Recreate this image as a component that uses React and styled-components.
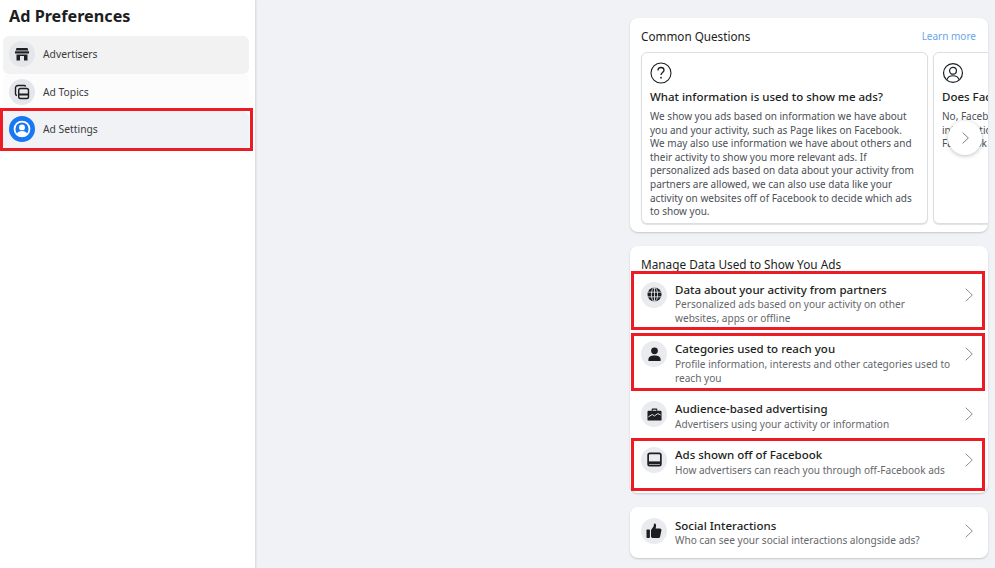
import React from "react";
import styled, { createGlobalStyle } from "styled-components";

const GlobalStyle = createGlobalStyle`
  html, body {
    margin: 0;
    padding: 0;
    height: 568px;
    overflow: hidden;
    background: #f0f2f5;
    font-family: "Noto Sans", "Open Sans", sans-serif;
    color: #1c1e21;
  }
`;

const Page = styled.div`
  display: flex;
  width: 995px;
  height: 568px;
  overflow: hidden;
`;

const Sidebar = styled.aside`
  width: 255px;
  height: 568px;
  flex: none;
  background: #fff;
  box-shadow: 1px 0 2px rgba(0, 0, 0, 0.12);
  padding: 5px 6px 0 3px;
  box-sizing: border-box;
`;

const SideTitle = styled.h1`
  margin: 0 0 9px 6px;
  font-size: 16.2px;
  line-height: 22px;
  font-weight: 700;
  color: #1c1e21;
`;

const SideItem = styled.div`
  position: relative;
  display: flex;
  align-items: center;
  gap: 8px;
  height: 37.5px;
  box-sizing: border-box;
  padding: 0 0 1.5px 6px;
  border-radius: 6px;
  background: ${(p) => p.$bg};
  font-size: 10.3px;
  color: #3a3b3d;
`;

const SideIcon = styled.span`
  width: 26px;
  height: 26px;
  border-radius: 50%;
  flex: none;
  display: flex;
  align-items: center;
  justify-content: center;
  background: ${(p) => (p.$active ? "#1877f2" : "#e4e6eb")};
`;

const Marker = styled.span`
  position: absolute;
  top: ${(p) => p.$top}px;
  right: ${(p) => p.$right}px;
  bottom: ${(p) => p.$bottom}px;
  left: ${(p) => p.$left}px;
  border: 3px solid #ed1c24;
  pointer-events: none;
`;

const Main = styled.main`
  flex: 1;
  padding: 18px 7px 0 375px;
  min-width: 0;
  display: flex;
  flex-direction: column;
`;

const Card = styled.section`
  width: 358px;
  margin-bottom: ${(p) => p.$gap}px;
  padding: ${(p) => p.$pad};
  background: #fff;
  border-radius: 8px;
  box-shadow: 0 1px 2px rgba(0, 0, 0, 0.18);
  box-sizing: border-box;
  overflow: ${(p) => (p.$clip ? "hidden" : "visible")};
  position: relative;
`;

const QuestionsHead = styled.div`
  display: flex;
  justify-content: space-between;
  align-items: center;
  height: 34px;
  padding: 2px 12px 0 11px;
  box-sizing: border-box;
  font-size: 11.7px;
  color: #1c1e21;
`;

const LearnMore = styled.a`
  color: #6aa5e8;
  font-size: 10px;
`;

const Carousel = styled.div`
  display: flex;
  gap: 5px;
  padding: 0 0 8px 11px;
`;

const QuestionCard = styled.article`
  flex: none;
  width: 287px;
  height: 172px;
  box-sizing: border-box;
  padding: 9px 8px 0;
  border: 1px solid #dadde1;
  border-radius: 6px;
  box-shadow: 0 1px 1px rgba(0, 0, 0, 0.12);
  background: #fff;
  overflow: hidden;
  svg {
    display: block;
  }
`;

const QuestionTitle = styled.h3`
  margin: 5px 0 5px;
  font-size: 11.5px;
  line-height: 16px;
  font-weight: 500;
  white-space: nowrap;
  color: #1c1e21;
`;

const QuestionText = styled.p`
  margin: 0;
  font-size: 10px;
  line-height: 13.6px;
  color: #4b4f56;
`;

const NextButton = styled.button`
  position: absolute;
  top: 103px;
  right: 6px;
  width: 34px;
  height: 34px;
  border: 0;
  padding: 0;
  border-radius: 50%;
  background: #fff;
  box-shadow: 0 1px 4px rgba(0, 0, 0, 0.25);
  display: flex;
  align-items: center;
  justify-content: center;
`;

const SectionTitle = styled.h2`
  margin: 0;
  padding: 10px 11px 0;
  font-size: 11.8px;
  line-height: 17.5px;
  font-weight: 400;
  color: #1c1e21;
`;

const Row = styled.div`
  position: relative;
  display: flex;
  align-items: flex-start;
  gap: 8px;
  padding: 8px 15px 8px 11px;
`;

const RowIcon = styled.span`
  width: 26px;
  height: 26px;
  border-radius: 50%;
  flex: none;
  display: flex;
  align-items: center;
  justify-content: center;
  background: #e9ebef;
`;

const RowBody = styled.div`
  flex: 1;
  min-width: 0;
`;

const RowTitle = styled.div`
  font-size: 11.5px;
  line-height: 15.8px;
  font-weight: 500;
  color: #1c1e21;
`;

const RowText = styled.div`
  max-width: 276px;
  font-size: 10.1px;
  line-height: 14px;
  color: #65676b;
`;

const RowArrow = styled.span`
  flex: none;
  display: flex;
  margin-top: 6px;
`;

const Chevron = ({ width = 8, height = 14, color = "#8a8d91" }) => (
  <svg width={width} height={height} viewBox="0 0 8 14" fill="none" stroke={color} strokeWidth="1">
    <path d="M.7.7L7.300 7 .7 13.300" />
  </svg>
);

const Store = () => (
  <svg width="16" height="16" viewBox="0 0 16 16" fill="#1c1e21">
    <path d="M2.500 2h11l.8 2.500H1.700z" />
    <path d="M1 5.300h14v2.200H1z" />
    <path d="M2.500 8.500h11V14.500H10V10H6v4.500H2.500z" />
  </svg>
);

const Topics = () => (
  <svg width="16" height="16" viewBox="0 0 16 16" fill="none" stroke="#1c1e21" strokeWidth="1.4">
    <path d="M3 11.500c-1-.2-1.500-.8-1.500-1.800V4c0-1.500 1-2.500 2.500-2.500h6c.8 0 1.400.4 1.700 1" />
    <rect x="4.700" y="4.500" width="9.800" height="10" rx="1.800" />
    <path d="M5 10.500h9" strokeWidth="2" />
  </svg>
);

const UserCircle = ({ color = "#fff", size = 18, width = 1.6 }) => (
  <svg width={size} height={size} viewBox="0 0 20 20" fill="none" stroke={color} strokeWidth={width}>
    <circle cx="10" cy="10" r="8.600" />
    <circle cx="10" cy="8" r="3.100" />
    <path d="M4.500 16c.8-2.500 3-3.500 5.500-3.500s4.700 1 5.500 3.500" />
  </svg>
);

const ActiveUser = () => (
  <svg width="18" height="18" viewBox="0 0 20 20" fill="none">
    <circle cx="10" cy="10" r="8.300" stroke="#fff" strokeWidth="2" />
    <circle cx="10" cy="8.200" r="3.300" fill="#fff" />
    <path d="M4.300 15.500c.8-2.500 3-3.300 5.700-3.300s4.900.8 5.700 3.300c-1.500 1.600-3.500 2.500-5.700 2.500s-4.200-.9-5.700-2.500z" fill="#fff" />
  </svg>
);

const QuestionMark = () => (
  <svg width="22" height="22" viewBox="0 0 22 22" fill="none" stroke="#1c1e21" strokeWidth="1.1">
    <circle cx="11" cy="11" r="10" />
    <path d="M8 8.500c0-1.800 1.300-3 3-3s3 1.100 3 2.700c0 2.300-3 2.400-3 4.800" strokeWidth="1.300" />
    <circle cx="11" cy="15.700" r="0.900" fill="#1c1e21" stroke="none" />
  </svg>
);

const Globe = () => (
  <svg width="15" height="15" viewBox="0 0 16 16" fill="none">
    <circle cx="8" cy="8" r="7.500" fill="#1c1e21" />
    <g stroke="#e9ebef" strokeWidth="0.9">
      <ellipse cx="8" cy="8" rx="3.300" ry="7.500" />
      <path d="M8 .5v15M.8 5.500h14.400M.8 10.500h14.400" />
    </g>
  </svg>
);

const Person = () => (
  <svg width="15" height="15" viewBox="0 0 16 16" fill="#1c1e21">
    <circle cx="8" cy="4" r="3.600" />
    <path d="M1.500 15v-2c0-2.500 2.500-4 6.500-4s6.500 1.500 6.500 4v2z" />
  </svg>
);

const Briefcase = () => (
  <svg width="15" height="15" viewBox="0 0 16 16" fill="#1c1e21">
    <path d="M5 4V2.500C5 1.700 5.600 1.500 6 1.500h4c.6 0 1 .4 1 1V4H9.800V2.800H6.200V4z" />
    <path d="M1.500 4h13c.6 0 1 .4 1 1v8.500c0 .6-.4 1-1 1h-13c-.6 0-1-.4-1-1V5c0-.6.4-1 1-1z" />
    <path d="M1.500 10.500l4-2.500 2.500 1.500 3.500-2.500 3 1.500" fill="none" stroke="#e9ebef" strokeWidth="1" />
  </svg>
);

const Tablet = () => (
  <svg width="15" height="15" viewBox="0 0 16 16" fill="none" stroke="#1c1e21" strokeWidth="1.800">
    <rect x="1.200" y="1.400" width="13.600" height="13.200" rx="1.800" />
    <path d="M2 11.500h12" strokeWidth="3" />
  </svg>
);

const Thumb = () => (
  <svg width="16" height="16" viewBox="0 0 16 16" fill="#1c1e21">
    <rect x="0.500" y="6.500" width="3.400" height="8.500" rx="0.800" />
    <path d="M5 7l2.500-3.500c.4-.8.400-1.700.4-2.500 0-.6 1-.8 1.500-.3.900.9.900 2.600.2 4.800h4.300c1.200 0 1.800 1 1.500 2l-1.300 6.200c-.2.900-.9 1.300-1.700 1.300H7c-1 0-2-.6-2-1.500z" />
  </svg>
);

const sideItems = [
  { label: "Advertisers", icon: <Store />, bg: "#f2f2f2" },
  { label: "Ad Topics", icon: <Topics />, bg: "#fcfcfc" },
  { label: "Ad Settings", icon: <ActiveUser />, bg: "#f0f2f5", active: true, marked: true },
];

const rows = [
  {
    title: "Data about your activity from partners",
    text: "Personalized ads based on your activity on other websites, apps or offline",
    icon: <Globe />,
    marker: { top: -3, bottom: 3 },
  },
  {
    title: "Categories used to reach you",
    text: "Profile information, interests and other categories used to reach you",
    icon: <Person />,
    marker: { top: 0, bottom: 2 },
  },
  {
    title: "Audience-based advertising",
    text: "Advertisers using your activity or information",
    icon: <Briefcase />,
  },
  {
    title: "Ads shown off of Facebook",
    text: "How advertisers can reach you through off-Facebook ads",
    icon: <Tablet />,
    marker: { top: -1, bottom: -6 },
  },
];

const ListRow = ({ row }) => (
  <Row>
    <RowIcon>{row.icon}</RowIcon>
    <RowBody>
      <RowTitle>{row.title}</RowTitle>
      <RowText>{row.text}</RowText>
    </RowBody>
    <RowArrow>
      <Chevron />
    </RowArrow>
    {row.marker && <Marker $left={1} $right={3} $top={row.marker.top} $bottom={row.marker.bottom} />}
  </Row>
);

export default function App() {
  return (
    <Page>
      <GlobalStyle />
      <Sidebar>
        <SideTitle>Ad Preferences</SideTitle>
        {sideItems.map((item) => (
          <SideItem key={item.label} $bg={item.bg}>
            <SideIcon $active={item.active}>{item.icon}</SideIcon>
            {item.label}
            {item.marked && <Marker $left={-3} $right={-4} $top={-3} $bottom={-2} />}
          </SideItem>
        ))}
      </Sidebar>
      <Main>
        <Card $gap={14} $clip>
          <QuestionsHead>
            Common Questions
            <LearnMore>Learn more</LearnMore>
          </QuestionsHead>
          <Carousel>
            <QuestionCard>
              <QuestionMark />
              <QuestionTitle>What information is used to show me ads?</QuestionTitle>
              <QuestionText>
                We show you ads based on information we have about you and your activity, such as Page
                likes on Facebook. We may also use information we have about others and their activity
                to show you more relevant ads. If personalized ads based on data about your activity
                from partners are allowed, we can also use data like your activity on websites off of
                Facebook to decide which ads to show you.
              </QuestionText>
            </QuestionCard>
            <QuestionCard>
              <UserCircle color="#1c1e21" size={22} width={1.1} />
              <QuestionTitle>Does Facebook sell my information?</QuestionTitle>
              <QuestionText>
                No, Facebook doesn't sell your
                <br />
                information to anyone.
                <br />
                Facebook
              </QuestionText>
            </QuestionCard>
          </Carousel>
          <NextButton aria-label="Next">
            <Chevron width={7} height={12} color="#65676b" />
          </NextButton>
        </Card>
        <Card $gap={14} $pad="0 0 8px">
          <SectionTitle>Manage Data Used to Show You Ads</SectionTitle>
          {rows.map((row) => (
            <ListRow key={row.title} row={row} />
          ))}
        </Card>
        <Card $gap={0} $pad="3px 0">
          <ListRow
            row={{
              title: "Social Interactions",
              text: "Who can see your social interactions alongside ads?",
              icon: <Thumb />,
            }}
          />
        </Card>
      </Main>
    </Page>
  );
}
